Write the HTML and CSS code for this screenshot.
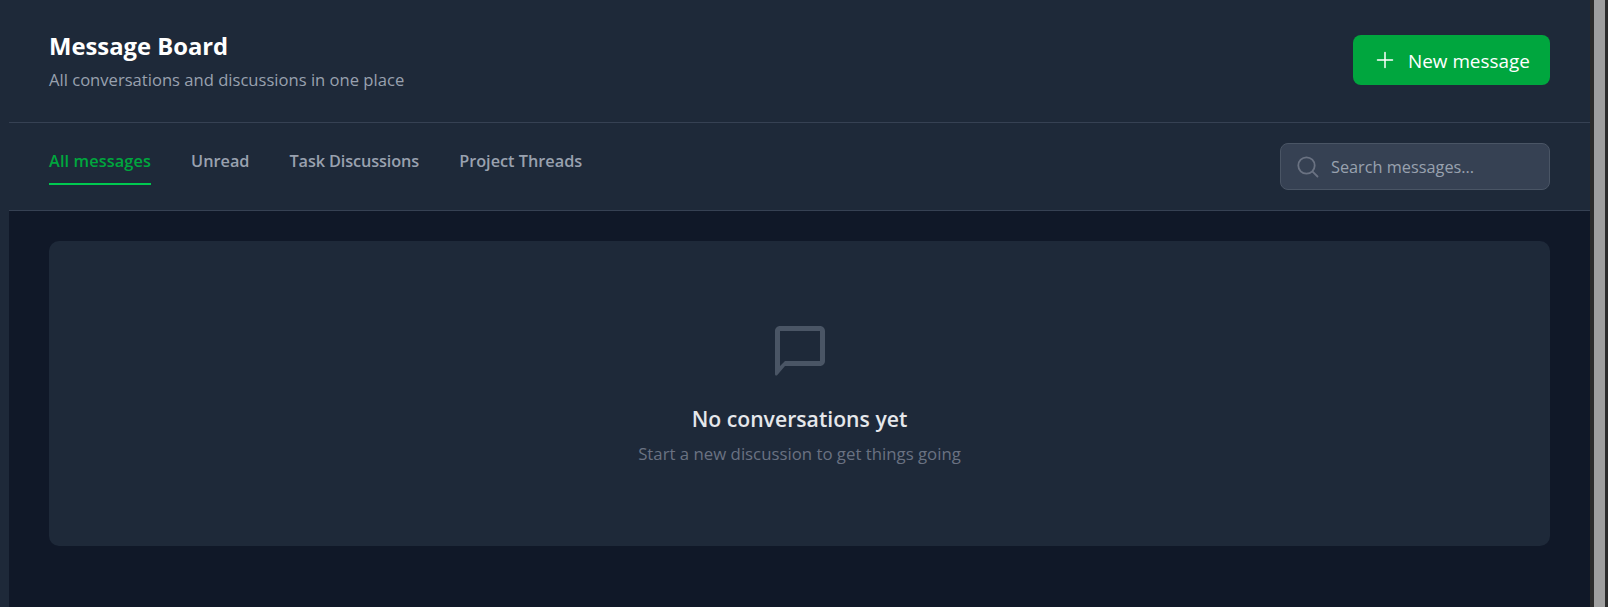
FILE: index.html
```html
<!DOCTYPE html>
<html>
	<head>
		<title>Message Board</title>
		<link rel="stylesheet" href="styles.css">
	</head>
	<body>
		<div class="page">
			<div class="rail"></div>
			<div class="main">
				<div class="topbar">
					<div class="titleRow">
						<div>
							<h1>Message Board</h1>
							<p class="subtitle">All conversations and discussions in one place</p>
						</div>
						<button class="newBtn">
							<svg width="24" height="24" viewBox="0 0 24 24" fill="none" stroke="currentColor" stroke-width="1.5" stroke-linecap="round"><path d="M12 4.5v15M4.5 12h15"/></svg>
							<span>New message</span>
						</button>
					</div>
					<div class="tabRow">
						<div class="tabs">
							<a class="tab active">All messages</a>
							<a class="tab">Unread</a>
							<a class="tab tight">Task Discussions</a>
							<a class="tab">Project Threads</a>
						</div>
						<div class="search">
							<svg width="24" height="24" viewBox="0 0 24 24" fill="none" stroke="currentColor" stroke-width="1.8" stroke-linecap="round"><circle cx="10.5" cy="10.5" r="8.2"/><path d="M16.6 16.6l4.9 4.9"/></svg>
							<span>Search messages...</span>
						</div>
					</div>
				</div>
				<div class="content">
					<div class="card">
						<svg class="bubble" width="60" height="60" viewBox="0 0 24 24" fill="currentColor"><path d="M20 2H4c-1.1 0-2 .9-2 2v17.3c0 .45.54.67.85.35L6 18h14c1.1 0 2-.9 2-2V4c0-1.1-.9-2-2-2zm0 14H6l-2 2V4h16v12z"/></svg>
						<h2>No conversations yet</h2>
						<p class="hint">Start a new discussion to get things going</p>
					</div>
				</div>
			</div>
			<div class="scroll"><div class="thumb"></div></div>
		</div>
	</body>
</html>
```

FILE: styles.css
```css
html, body {
	margin: 0;
	height: 100%;
	overflow: hidden;
	background-color: #101828;
	font-family: "Open Sans", "Noto Sans", sans-serif;
}
.page {
	display: flex;
	height: 607px;
}
.rail {
	width: 9px;
	background-color: #1e2939;
}
.main {
	flex: 1;
	display: flex;
	flex-direction: column;
	min-width: 0;
}
.topbar {
	background-color: #1e2939;
	border-bottom: 1px solid #364153;
}
.titleRow {
	height: 123px;
	box-sizing: border-box;
	display: flex;
	justify-content: space-between;
	align-items: flex-start;
	padding: 30px 40px 0;
	border-bottom: 1px solid #364153;
}
h1 {
	margin: 0;
	color: white;
	font-size: 23.8px;
	line-height: 32px;
	font-weight: 700;
}
.subtitle {
	margin: 6px 0 0;
	color: #99a1af;
	font-size: 16.6px;
	line-height: 24px;
}
.newBtn {
	display: flex;
	align-items: center;
	gap: 11px;
	width: 197px;
	height: 50px;
	margin-top: 5px;
	padding: 0 0 0 20px;
	border: none;
	border-radius: 8px;
	background-color: #00a63e;
	color: white;
	font-family: inherit;
	font-size: 18.9px;
	white-space: nowrap;
}
.newBtn span {
	padding-top: 1px;
}
.tabRow {
	height: 87px;
	box-sizing: border-box;
	display: flex;
	justify-content: space-between;
	align-items: center;
	padding: 0 40px;
}
.tabs {
	display: flex;
	gap: 40px;
	align-self: flex-start;
}
.tab {
	display: block;
	height: 62px;
	box-sizing: border-box;
	padding-top: 26px;
	color: #99a1af;
	font-size: 16.3px;
	line-height: 24px;
	font-weight: 600;
	border-bottom: 2px solid transparent;
}
.tab.active {
	color: #00a63e;
	border-bottom-color: #00c950;
	letter-spacing: 0.12px;
}
.tab.tight {
	letter-spacing: -0.12px;
}
.search {
	width: 270px;
	height: 47px;
	box-sizing: border-box;
	display: flex;
	align-items: center;
	gap: 11px;
	padding-left: 15px;
	background-color: #364153;
	border: 1px solid #4a5565;
	border-radius: 8px;
	color: #6a7282;
}
.search span {
	color: #99a1af;
	font-size: 16.3px;
}
.content {
	flex: 1;
	padding: 30px 40px;
}
.card {
	height: 305px;
	box-sizing: border-box;
	padding-top: 80px;
	background-color: #1e2939;
	border-radius: 10px;
	text-align: center;
}
.bubble {
	display: block;
	margin: 0 auto;
	color: #4a5565;
}
h2 {
	margin: 24px 0 0;
	color: #e5e7eb;
	font-size: 21.2px;
	line-height: 28px;
	font-weight: 600;
}
.hint {
	margin: 9px 0 0;
	color: #6a7282;
	font-size: 16.8px;
	line-height: 24px;
}
.scroll {
	width: 18px;
	box-sizing: border-box;
	background-color: #2c2c2c;
	padding: 0 3px 0 4px;
}
.thumb {
	height: 100%;
	background-color: #9f9f9f;
}
```
